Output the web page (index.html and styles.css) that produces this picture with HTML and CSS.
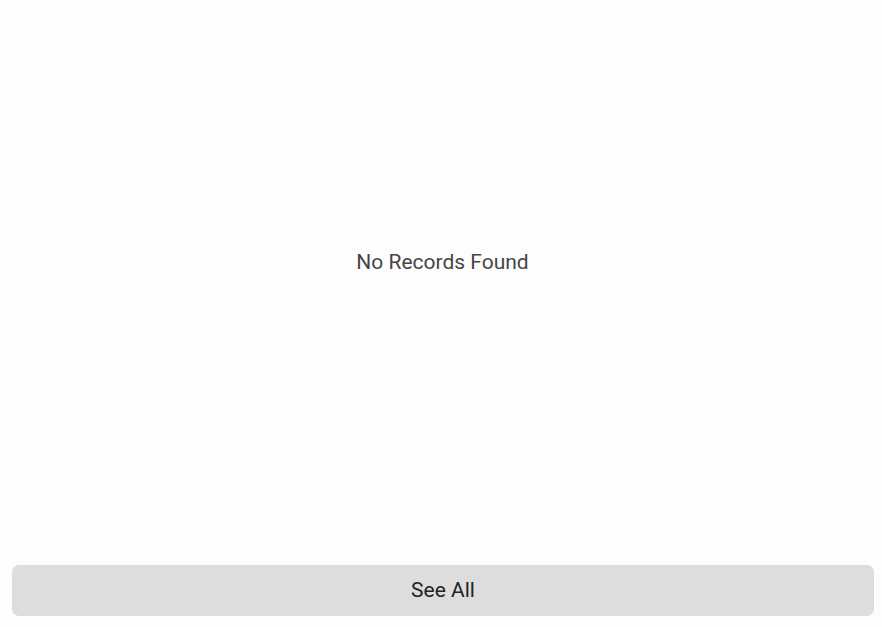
FILE: index.html
```html
<!DOCTYPE html>
<html>
<head>
<meta charset="utf-8">
<link rel="stylesheet" href="styles.css">
</head>
<body>
<div class="card">
  <div class="empty">No Records Found</div>
  <div class="footer">
    <button class="see-all">See All</button>
  </div>
</div>
</body>
</html>
```
FILE: styles.css
```css
html, body {
  margin: 0;
  padding: 0;
  background: #ffffff;
}
body {
  font-family: Roboto, "Liberation Sans", sans-serif;
}
.card {
  width: 882px;
  height: 627px;
  background: #fdfdfd;
  display: flex;
  flex-direction: column;
}
.empty {
  height: 524px;
  padding-left: 3px;
  display: flex;
  align-items: center;
  justify-content: center;
  font-size: 21px;
  color: #464646;
}
.footer {
  padding: 41px 8px 11px 12px;
}
.see-all {
  display: block;
  width: 862px;
  height: 51px;
  border: none;
  border-radius: 7px;
  background: #dddddd;
  color: #222222;
  font-family: Roboto, "Liberation Sans", sans-serif;
  font-size: 21px;
  line-height: 49px;
  padding: 0;
  cursor: pointer;
}
```
